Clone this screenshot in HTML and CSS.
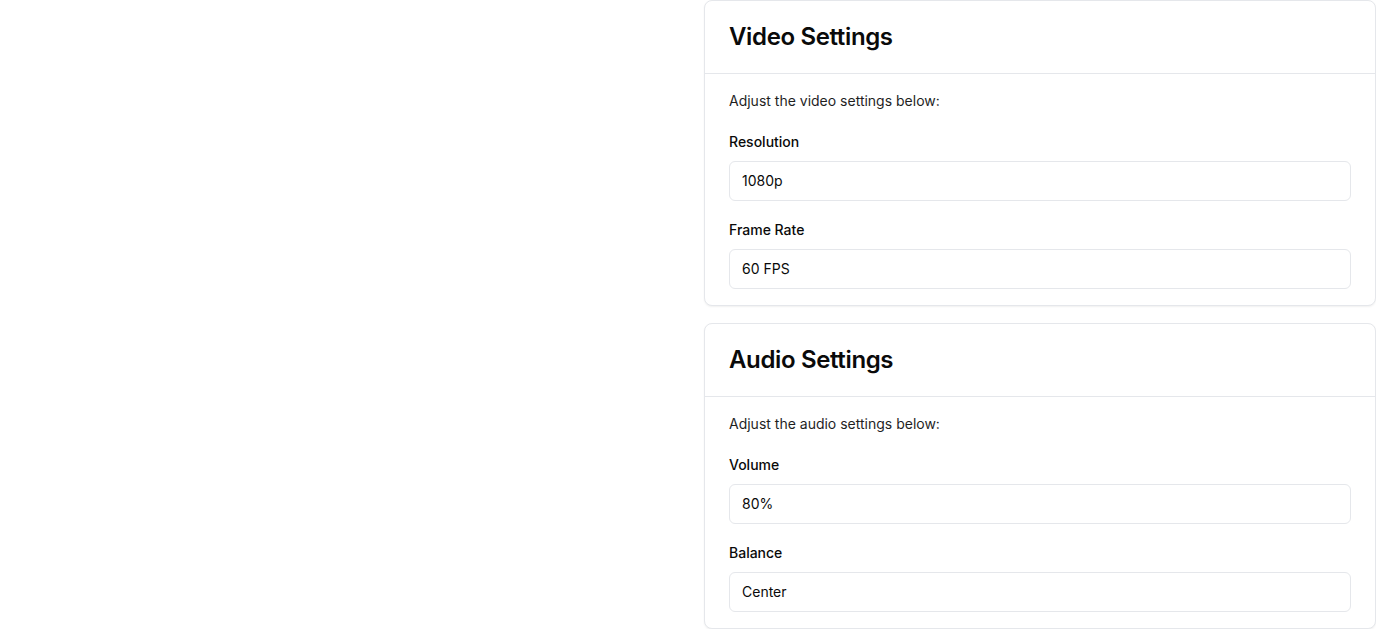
FILE: index.html
```html
<!DOCTYPE html>
<html lang="en">
<head>
<meta charset="utf-8">
<title>Settings</title>
<link rel="stylesheet" href="styles.css">
</head>
<body>
<main class="layout">
  <div class="spacer"></div>
  <div class="stack">
    <section class="card">
      <header class="card-header">
        <h2 class="card-title">Video Settings</h2>
      </header>
      <div class="card-content">
        <p class="intro">Adjust the video settings below:</p>
        <div class="field">
          <label class="label" for="res">Resolution</label>
          <input class="input" id="res" type="text" value="1080p">
        </div>
        <div class="field">
          <label class="label" for="fps">Frame Rate</label>
          <input class="input" id="fps" type="text" value="60 FPS">
        </div>
      </div>
    </section>
    <section class="card">
      <header class="card-header">
        <h2 class="card-title">Audio Settings</h2>
      </header>
      <div class="card-content">
        <p class="intro">Adjust the audio settings below:</p>
        <div class="field">
          <label class="label" for="vol">Volume</label>
          <input class="input" id="vol" type="text" value="80%">
        </div>
        <div class="field">
          <label class="label" for="bal">Balance</label>
          <input class="input" id="bal" type="text" value="Center">
        </div>
      </div>
    </section>
  </div>
</main>
</body>
</html>
```

FILE: styles.css
```css
* { box-sizing: border-box; }

html, body {
  margin: 0;
  padding: 0;
  background: #ffffff;
}

body {
  font-family: Inter, "Liberation Sans", sans-serif;
  color: #0a0a0a;
}

.layout {
  display: grid;
  grid-template-columns: 1fr 1fr;
  column-gap: 32px;
}

.stack {
  display: flex;
  flex-direction: column;
  gap: 17px;
}

.card {
  border: 1px solid #e5e7eb;
  border-radius: 8px;
  background: #ffffff;
  box-shadow: 0 1px 2px rgba(0, 0, 0, 0.06);
}

.card-header {
  padding: 24px;
  border-bottom: 1px solid #e5e7eb;
}

.card-title {
  margin: 0;
  font-size: 24px;
  line-height: 24px;
  font-weight: 600;
  letter-spacing: -0.015em;
}

.card-content {
  padding: 17px 24px 16px;
  display: flex;
  flex-direction: column;
}

.intro {
  margin: 0 0 21px;
  font-size: 14px;
  line-height: 20px;
  color: #1f1f1f;
}

.field {
  display: flex;
  flex-direction: column;
}

.field + .field {
  margin-top: 19px;
}

.label {
  font-size: 14px;
  line-height: 20px;
  font-weight: 500;
  margin-bottom: 9px;
}

.input {
  height: 40px;
  width: 100%;
  border: 1px solid #e5e7eb;
  border-radius: 6px;
  padding: 0 12px 1px;
  font-family: inherit;
  font-size: 14px;
  color: #0a0a0a;
  background: #ffffff;
  outline: none;
}
```
